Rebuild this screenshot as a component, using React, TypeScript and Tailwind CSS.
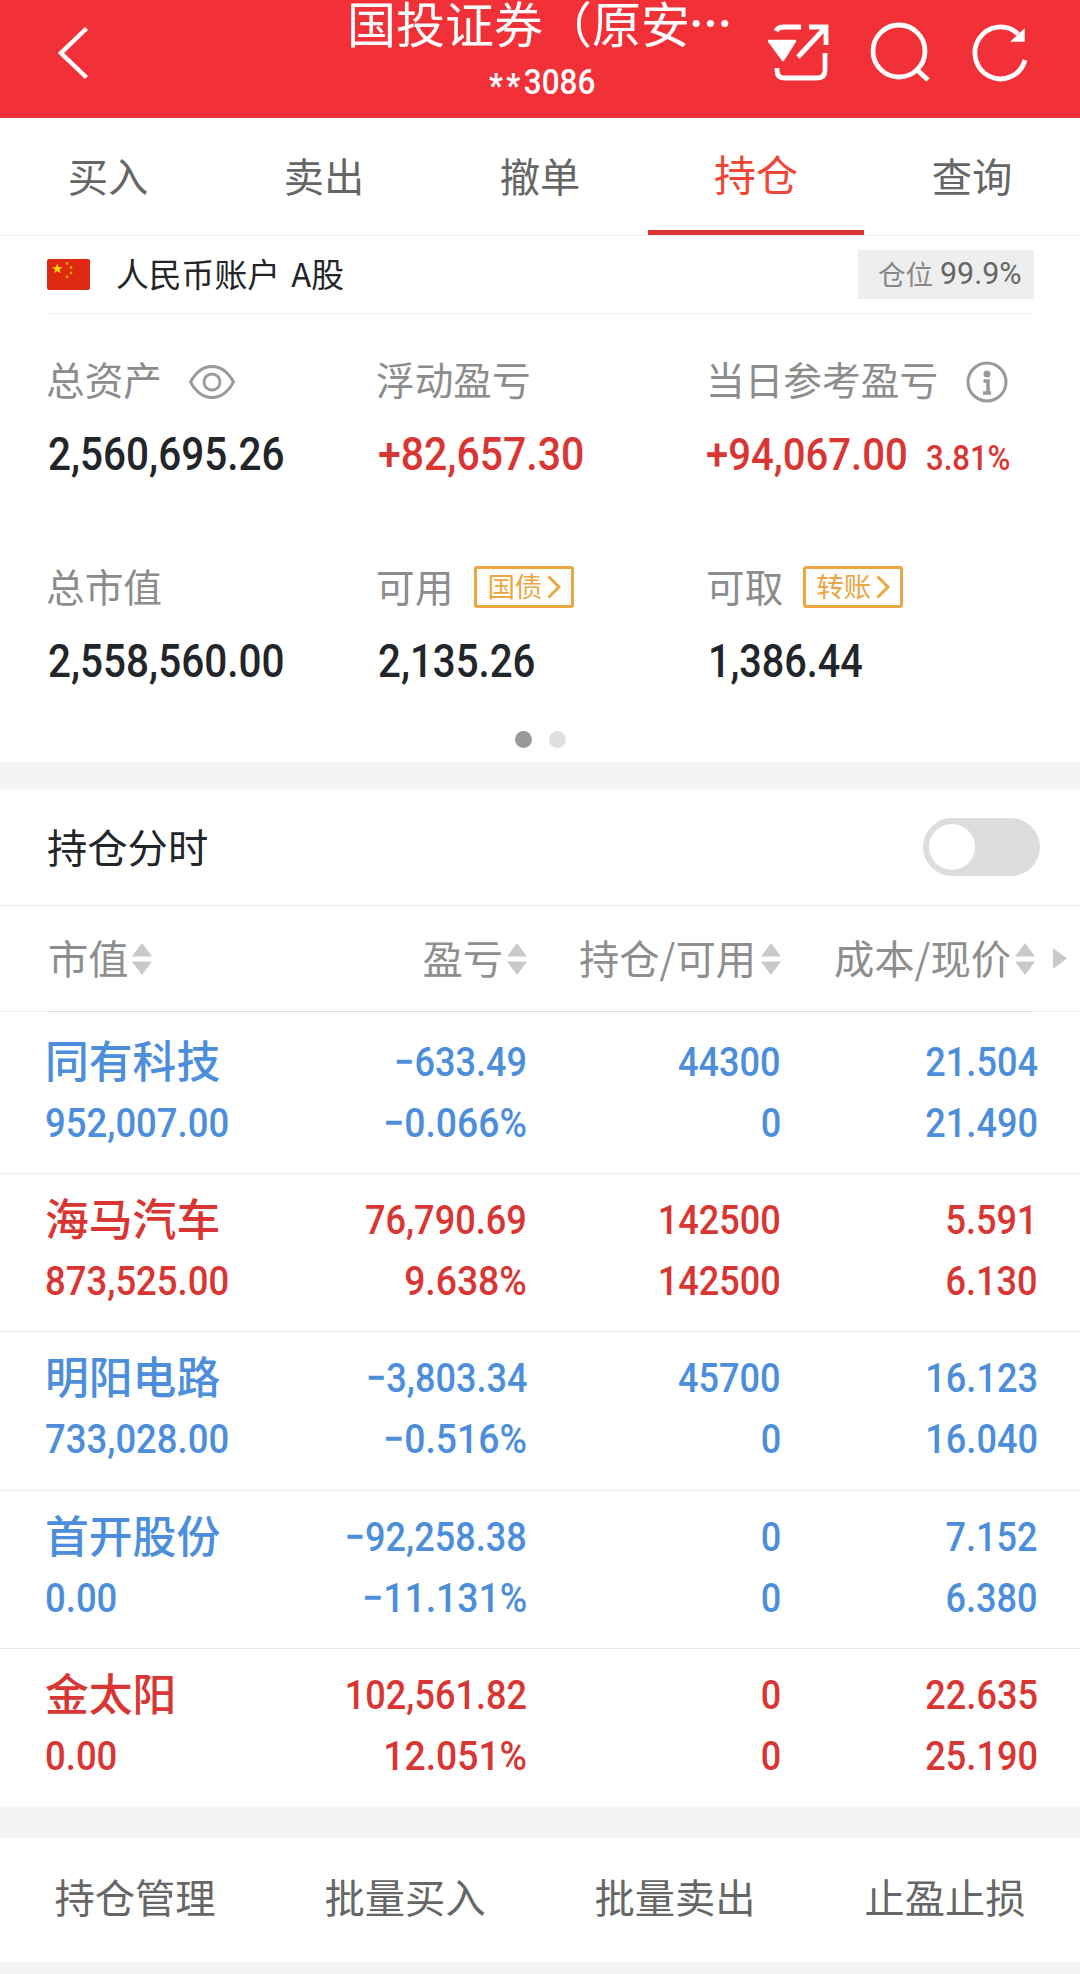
import React from "react";

const RED = "text-[#d93532]";
const BLUE = "text-[#4c8edc]";

const holdings = [
  { name: "同有科技", color: BLUE, value: "952,007.00", pnl: ["−633.49", "−0.066%"], qty: ["44300", "0"], price: ["21.504", "21.490"] },
  { name: "海马汽车", color: RED, value: "873,525.00", pnl: ["76,790.69", "9.638%"], qty: ["142500", "142500"], price: ["5.591", "6.130"] },
  { name: "明阳电路", color: BLUE, value: "733,028.00", pnl: ["−3,803.34", "−0.516%"], qty: ["45700", "0"], price: ["16.123", "16.040"] },
  { name: "首开股份", color: BLUE, value: "0.00", pnl: ["−92,258.38", "−11.131%"], qty: ["0", "0"], price: ["7.152", "6.380"] },
  { name: "金太阳", color: RED, value: "0.00", pnl: ["102,561.82", "12.051%"], qty: ["0", "0"], price: ["22.635", "25.190"] },
];

function Num({ children, className = "" }: { children: React.ReactNode; className?: string }) {
  return (
    <span className={`inline-block whitespace-nowrap font-[Roboto,sans-serif] ${className}`}>{children}</span>
  );
}

function SortArrows() {
  return (
    <svg width="20" height="32" viewBox="0 0 20 32" fill="#c9c9c9" className="shrink-0">
      <path d="M10 0 20 13.5H0zM0 18.5h20L10 32z" />
    </svg>
  );
}

function LinkBox({ label }: { label: string }) {
  return (
    <span className="mt-[2px] flex h-[42px] w-[100px] items-center justify-center rounded-[3px] border-[3px] border-[#eaa640] text-[27.5px] leading-[27px] text-[#eaa640]">
      <span className="-mt-[3px]">{label}</span>
      <svg width="14" height="24" viewBox="0 0 14 24" fill="none" stroke="#eaa640" strokeWidth="3" className="ml-[5px]">
        <path d="M1.5 1.5 12 12 1.5 22.5" />
      </svg>
    </span>
  );
}

function Metric({ label, extra, children }: { label: string; extra?: React.ReactNode; children: React.ReactNode }) {
  return (
    <div className="flex flex-col">
      <div className="flex h-[56px] items-center text-[38.7px] leading-[56px] text-[#8c8c8c]">
        <span className="-ml-[1px] -mt-[3px] whitespace-nowrap">{label}</span>
        {extra}
      </div>
      <div className="ml-px mt-[21px] flex h-[54px] items-center whitespace-nowrap">{children}</div>
    </div>
  );
}

function HeadCell({ label, className = "" }: { label: string; className?: string }) {
  return (
    <div className={`flex items-center ${className}`}>
      <span className="-mt-[3px] whitespace-nowrap">{label}</span>
      <SortArrows />
    </div>
  );
}

export default function App() {
  return (
    <div className="flex h-[1974px] w-[1080px] flex-col bg-white font-['Noto_Sans_CJK_SC',sans-serif]">
      <header className="flex h-[118px] shrink-0 items-center bg-[#f23038] text-white">
        <svg width="32" height="54" viewBox="0 0 32 54" fill="none" stroke="#fff" strokeWidth="4.4" className="-mt-[13px] ml-[58px]">
          <path d="M28.5 2.5 3 27l25.5 24.5" />
        </svg>
        <div className="ml-[257px] flex w-[386px] flex-col items-center self-start">
          <div className="flex h-[54px] self-start whitespace-nowrap text-[49px] leading-[43px]">
            国投证券（原安<span className="-ml-[1px] text-[43px] font-bold">⋯</span>
          </div>
          <Num className="ml-[4px] mt-[6px] origin-center scale-x-[.9] text-[35px] font-medium leading-[46px]">
            <span className="inline-block translate-y-[3px] text-[33px] font-black tracking-[4px]">**</span>3086
          </Num>
        </div>
        <svg width="64" height="60" viewBox="0 0 64 60" fill="none" stroke="#fff" strokeWidth="4.8" className="ml-[33px] mt-[-14px]">
          <path d="M10 9q2-4 8-4h17M43 5h17v18M59 6 32 35M59 31v17q0 8-8 8H18q-7 0-7-8v-2" />
          <path d="M3 19h26L17 38z" fill="#fff" strokeWidth="2.5" strokeLinejoin="round" />
        </svg>
        <svg width="60" height="60" viewBox="0 0 60 60" fill="none" stroke="#fff" strokeWidth="4.8" className="ml-[40px] mt-[-14px]">
          <circle cx="29" cy="29" r="26" />
          <path d="M46 47l12 11" strokeWidth="5" />
        </svg>
        <svg width="58" height="60" viewBox="0 0 58 60" fill="none" stroke="#fff" strokeWidth="4.8" className="ml-[41px] mt-[-12px]">
          <path d="M54 37A25.5 26 0 1 1 47 11" />
          <path d="M53 7v11H41z" fill="#fff" strokeWidth="1.5" />
        </svg>
      </header>

      <nav className="grid h-[118px] shrink-0 grid-cols-5 border-b border-[#ececec] text-center text-[40.3px] leading-[114px] text-[#666]">
        <span>买入</span>
        <span>卖出</span>
        <span>撤单</span>
        <span className="border-b-[5px] border-[#e03535] text-[42px] leading-[109px] text-[#f04636]">持仓</span>
        <span>查询</span>
      </nav>

      <section className="flex h-[526px] shrink-0 flex-col pl-[47px] pr-[46px]">
        <div className="flex h-[78px] shrink-0 items-center border-b border-[#eee]">
          <svg width="43" height="31" viewBox="0 0 43 31">
            <rect width="43" height="31" rx="2" fill="#de2810" />
            <path d="M10.3 4.500l1.3 3.700h4l-3.200 2.300 1.200 3.800-3.300-2.300-3.200 2.300 1.200-3.800L5 8.200h4z" fill="#ffde00" />
            <g fill="#f5a800">
              <circle cx="20" cy="4.5" r="1.4" />
              <circle cx="24" cy="8.5" r="1.4" />
              <circle cx="24" cy="14" r="1.4" />
              <circle cx="20" cy="18" r="1.4" />
            </g>
          </svg>
          <span className="-mt-[4px] ml-[26px] text-[32.8px] leading-[48px] text-[#222529] [word-spacing:4px]">人民币账户 A股</span>
          <div className="ml-auto flex h-[49px] w-[176px] items-center bg-[#eee] pl-[20px] text-[27.5px] leading-[40px] text-[#888]">
            <span className="-mt-[4px]">仓位</span>
            <Num className="-mt-px ml-[7px] origin-left scale-x-[.98] text-[31px] text-[#666]">99.9%</Num>
          </div>
        </div>

        <div className="mt-[37px] grid h-[207px] grid-cols-[330px_330px_327px]">
          <Metric
            label="总资产"
            extra={
              <svg width="46" height="34" viewBox="0 0 46 34" fill="none" stroke="#999" strokeWidth="2.8" className="ml-[27px] mt-[5px]">
                <path d="M1.500 17C7 7 14 1.500 23 1.500S39 7 44.500 17C39 27 32 32.500 23 32.500S7 27 1.500 17z" />
                <circle cx="23" cy="17" r="8" />
              </svg>
            }
          >
            <Num className="origin-left scale-x-[.89] text-[45.5px] font-medium text-[#222529]">2,560,695.26</Num>
          </Metric>
          <Metric label="浮动盈亏">
            <Num className={`origin-left scale-x-[.9] text-[45.5px] font-medium ${RED}`}>+82,657.30</Num>
          </Metric>
          <Metric
            label="当日参考盈亏"
            extra={
              <svg width="42" height="42" viewBox="0 0 42 42" fill="none" stroke="#999" strokeWidth="3" className="ml-[28px] mt-[5px] shrink-0">
                <circle cx="21" cy="21" r="19" />
                <circle cx="21" cy="13" r="3.500" fill="#999" stroke="none" />
                <path d="M17.500 20h4.500v12M17 32h8" strokeWidth="3.600" />
              </svg>
            }
          >
            <div className="-ml-[2px] flex items-baseline">
              <Num className={`w-[220px] origin-left scale-x-[.9] text-[44.5px] font-medium ${RED}`}>+94,067.00</Num>
              <Num className={`origin-left scale-x-[.9] text-[34.5px] font-medium ${RED}`}>3.81%</Num>
            </div>
          </Metric>
        </div>

        <div className="grid h-[165px] grid-cols-[330px_330px_327px]">
          <Metric label="总市值">
            <Num className="origin-left scale-x-[.89] text-[45.5px] font-medium text-[#222529]">2,558,560.00</Num>
          </Metric>
          <Metric label="可用" extra={<span className="ml-[21px]"><LinkBox label="国债" /></span>}>
            <Num className="origin-left scale-x-[.885] text-[45.5px] font-medium text-[#222529]">2,135.26</Num>
          </Metric>
          <Metric label="可取" extra={<span className="ml-[20px]"><LinkBox label="转账" /></span>}>
            <Num className="origin-left scale-x-[.87] text-[45.5px] font-medium text-[#222529]">1,386.44</Num>
          </Metric>
        </div>
        <div className="mt-[8px] flex justify-center gap-[17px]">
          <span className="size-[17px] rounded-full bg-[#999]" />
          <span className="size-[17px] rounded-full bg-[#dfdfdf]" />
        </div>
      </section>

      <div className="h-[27px] shrink-0 bg-[#f4f4f4]" />

      <section className="flex h-[117px] shrink-0 items-center justify-between border-b border-[#eaeaea] pl-[47px] pr-[40px]">
        <span className="-mt-[3px] text-[40.3px] leading-[60px] text-[#222529]">持仓分时</span>
        <span className="flex h-[58px] w-[117px] items-center rounded-full bg-[#ddd] pl-[6px]">
          <span className="size-[46px] rounded-full bg-white" />
        </span>
      </section>

      <section className="flex h-[105px] shrink-0 text-[40.3px] leading-[60px] text-[#8e8e8e]">
        <HeadCell label="市值" className="w-[152px] justify-between pl-[48px]" />
        <HeadCell label="盈亏" className="w-[375px] justify-end gap-[4px]" />
        <HeadCell label="持仓/可用" className="w-[254px] justify-end gap-[5px]" />
        <HeadCell label="成本/现价" className="w-[254px] justify-end gap-[4px]" />
        <svg width="14" height="21" viewBox="0 0 14 21" fill="#c9c9c9" className="ml-[18px] self-center">
          <path d="M0 0 14 10.500 0 21z" />
        </svg>
      </section>
      <div className="flex h-px shrink-0 bg-[#f2f2f2] px-[47px]">
        <div className="h-px flex-1 bg-[#dedede]" />
      </div>

      <main className="flex h-[795px] shrink-0 flex-col pt-[4px]">
        {holdings.map((h, i) => (
          <div
            key={h.name}
            className={`grid h-[158.2px] shrink-0 grid-cols-[481px_254px_257px] pl-[46px] pt-[16px] ${i < 4 ? "border-b border-[#e8e8e8]" : ""} ${h.color}`}
          >
            <div className="flex justify-between">
              <div>
                <div className="-ml-px h-[61px] whitespace-nowrap text-[43.8px] font-medium leading-[55px]">{h.name}</div>
                <Num className="-ml-px origin-left scale-x-[.89] text-[41px] font-medium leading-[61px]">{h.value}</Num>
              </div>
              <Lines items={h.pnl} />
            </div>
            <Lines items={h.qty} />
            <Lines items={h.price} />
          </div>
        ))}
      </main>

      <div className="h-[31px] shrink-0 bg-[#f4f4f4]" />
      <footer className="grid h-[124px] shrink-0 grid-cols-4 text-center text-[40.3px] leading-[115px] text-[#666]">
        <span>持仓管理</span>
        <span>批量买入</span>
        <span>批量卖出</span>
        <span>止盈止损</span>
      </footer>
      <div className="h-[12px] shrink-0 bg-[#f4f4f4]" />
    </div>
  );
}

function Lines({ items }: { items: string[] }) {
  return (
    <div className="flex flex-col items-end">
      {items.map((t, i) => (
        <Num
          key={i}
          className={`origin-right text-[41px] font-medium leading-[61px] ${t.endsWith("%") ? "scale-x-[.91]" : "scale-x-[.88]"}`}
        >
          {t}
        </Num>
      ))}
    </div>
  );
}
